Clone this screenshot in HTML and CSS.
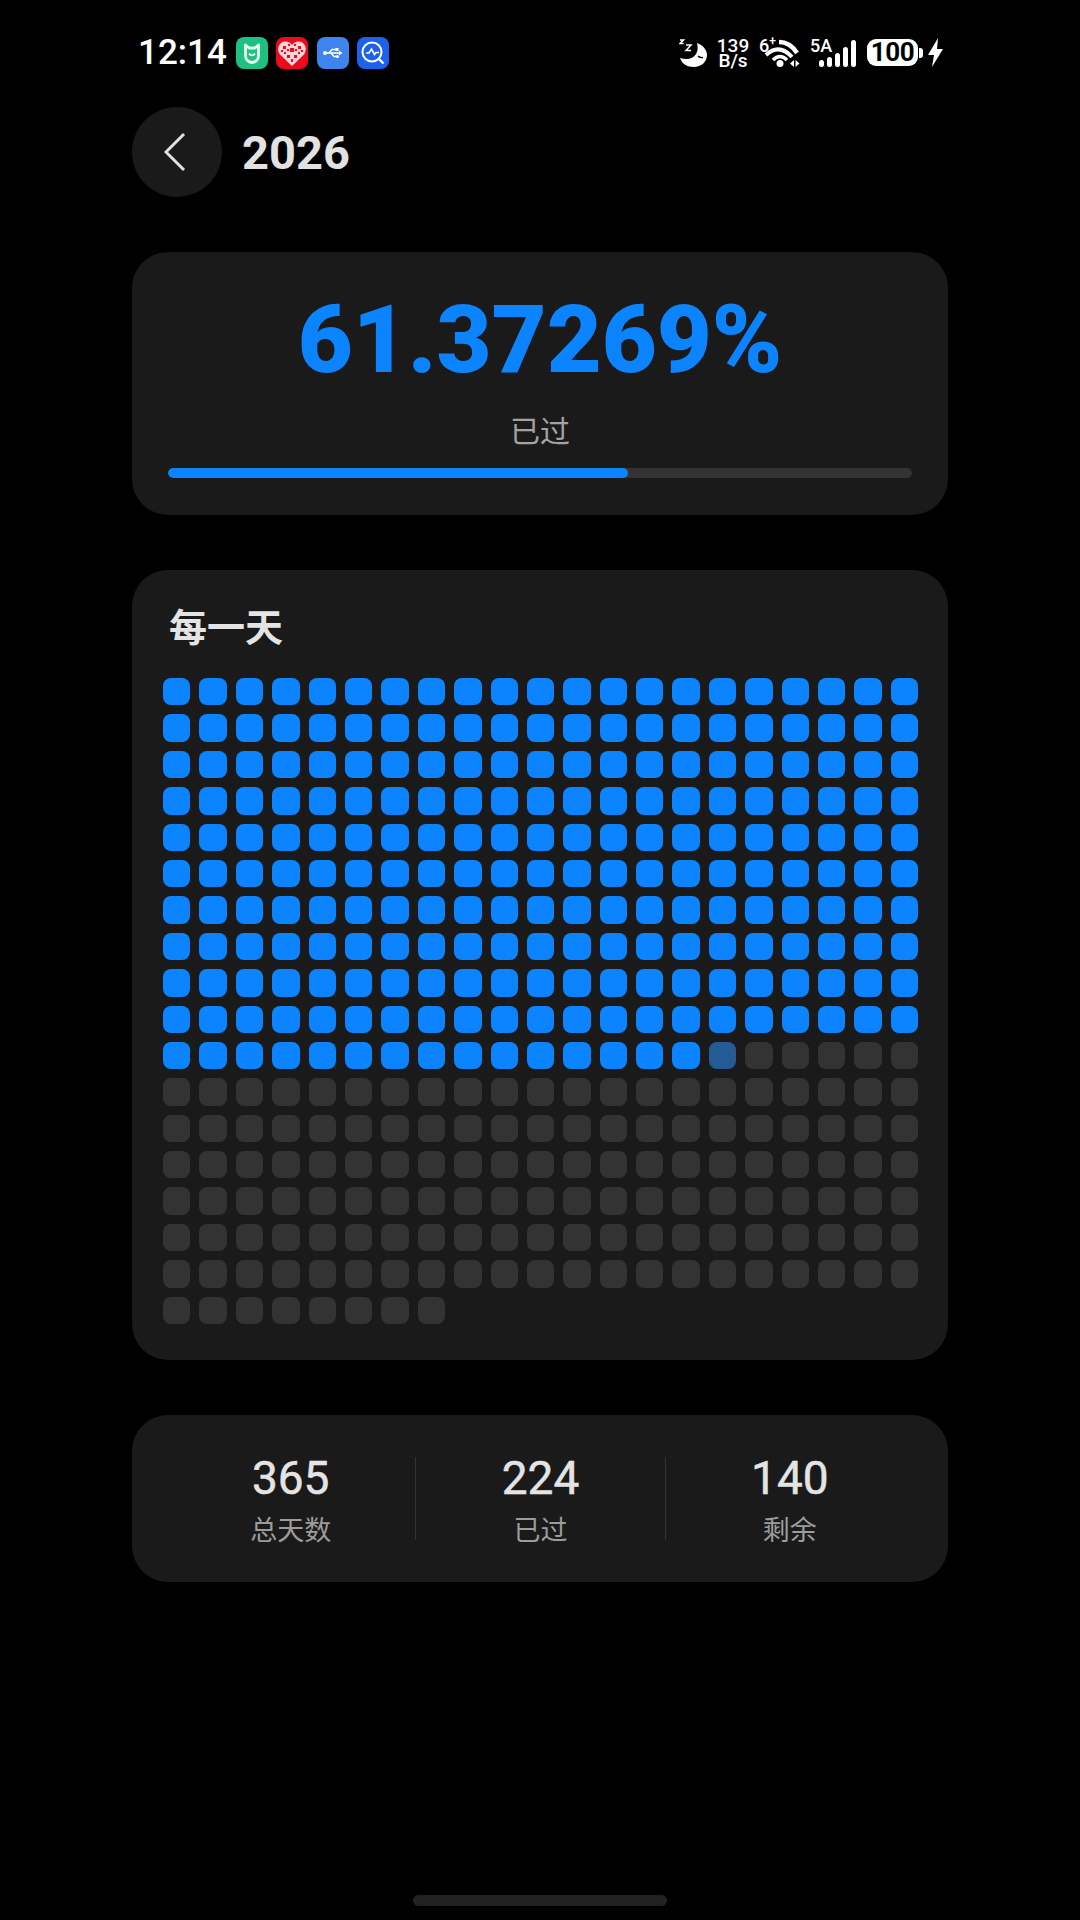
FILE: index.html
```html
<!DOCTYPE html>
<html lang="zh-CN">
<head>
  <meta charset="UTF-8">
  <meta name="viewport" content="width=device-width, initial-scale=1.0">
  <title>2026</title>
  <link rel="stylesheet" href="styles.css">
</head>
<body>
  <div id="statusBar">
    <div class="statusLeft">
      <span class="clock">12:14</span>
      <div class="appIcons">
        <svg class="appIcon" viewBox="0 0 32 32"><rect width="32" height="32" rx="8" fill="#1fc183"/><path d="M9.5 8v11a6.5 6.5 0 0 0 13 0V8l-3.5 3h-6z" fill="none" stroke="#e8fff5" stroke-width="2.8" stroke-linejoin="round"/><path d="M13 16.5c1.5 2.500 4.500 2.500 6 0" fill="none" stroke="#e8fff5" stroke-width="1.8"/></svg>
        <svg class="appIcon" viewBox="0 0 32 32"><rect width="32" height="32" rx="8" fill="#ee0a1c"/><path d="M16 29 4 17.5C0 12 3 4.5 9.5 4.5c3 0 5 1.500 6.500 3.500 1.500-2 3.500-3.500 6.500-3.500C29 4.500 32 12 28 17.500z" fill="#f9d3d6"/><path d="M7 9h3v3H7zM12 7h2v2h-2zM18 7h2v2h-2zM22 9h3v3h-3zM14 11h4v4h-4zM8 15h2v2H8zM22 15h2v2h-2zM11 18h3v3h-3zM18 18h3v3h-3zM15 22h2v3h-2zM5 13h2v2H5zM25 13h2v2h-2zM11 12h2v2h-2zM19 12h2v2h-2z" fill="#ee0a1c"/></svg>
        <svg class="appIcon" viewBox="0 0 32 32"><rect width="32" height="32" rx="8" fill="#3f84ee"/><path d="M8 16h15M12 16l3-3.500h4M14 16l3 3.500h3" fill="none" stroke="#fff" stroke-width="1.5"/><circle cx="8" cy="16" r="2" fill="#fff"/><path d="M22 13.5l3.5 2.500-3.500 2.500z" fill="#fff"/><rect x="18.5" y="11" width="3" height="3" fill="#fff"/><circle cx="20.5" cy="19.5" r="1.5" fill="#fff"/></svg>
        <svg class="appIcon" viewBox="0 0 32 32"><rect width="32" height="32" rx="8" fill="#1c62ea"/><circle cx="15" cy="15" r="9.5" fill="none" stroke="#fff" stroke-width="2"/><path d="M22 22l4.5 4.500" stroke="#fff" stroke-width="2.4"/><path d="M9 16h3l2.500-4 3 5.500 1.500-2h3" fill="none" stroke="#fff" stroke-width="1.6"/></svg>
      </div>
    </div>
    <div class="statusRight">
      <svg class="moon" viewBox="0 0 28 28">
        <path d="M18 4c6 2 10 7 10 12 0 7-6 12-13 12C8 28 3 25 1 19c7 2 13 1 16-4 2-3 2-7 1-11z" fill="#fff"/>
        <path d="M19 17c1.500 1.500 3 2 5 1.500" fill="none" stroke="#000" stroke-width="1.4"/>
        <path d="M1 1h3.500L1 4.500h3.500M7 6h5l-5 5.500h5" fill="none" stroke="#fff" stroke-width="1.5"/>
      </svg>
      <div class="speed"><span>139</span><span>B/s</span></div>
      <div class="wifiBox">
        <span class="wifiGen">6<sup>+</sup></span>
        <svg class="wifi" viewBox="0 0 41 29">
          <path d="M20 4Q31 4 38 15" fill="none" stroke="#fff" stroke-width="4.5"/>
          <path d="M7 17Q20 5 33 19" fill="none" stroke="#fff" stroke-width="4"/>
          <path d="M14 22Q21 15 28 22" fill="none" stroke="#fff" stroke-width="3.5"/>
          <circle cx="21" cy="25.500" r="3.500" fill="#fff"/>
          <path d="M31 25.500l4-3.500v7zM36.500 22l4 3.500-4 3.500z" fill="#fff"/>
        </svg>
      </div>
      <div class="signal">
        <span class="netType">5A</span>
        <div class="bars"><i class="b1"></i><i class="b2"></i><i class="b3"></i><i class="b4"></i><i class="b5"></i></div>
      </div>
      <div class="battery"><span class="batteryBody">100</span><i class="batteryNub"></i></div>
      <svg class="bolt" viewBox="0 0 15 29"><path d="M10 0 0 17h6l-2 12L15 11H9z" fill="#fff"/></svg>
    </div>
  </div>

  <div id="wrapper">
    <div class="header">
      <div class="backButton">
        <svg viewBox="0 0 22 40"><path d="M20 2 2 20l18 18" fill="none" stroke="#e0e0e0" stroke-width="3"/></svg>
      </div>
      <h1>2026</h1>
    </div>

    <div class="card percentCard">
      <div class="percent">61.37269%</div>
      <div class="percentLabel">已过</div>
      <div class="progress"><div class="progressFill" style="width: 61.8%"></div></div>
    </div>

    <div class="card daysCard">
      <h2>每一天</h2>
      <div id="dayGrid"></div>
    </div>

    <div class="card statsCard">
      <div class="stat"><span class="statValue">365</span><span class="statLabel">总天数</span></div>
      <div class="stat"><span class="statValue">224</span><span class="statLabel">已过</span></div>
      <div class="stat"><span class="statValue">140</span><span class="statLabel">剩余</span></div>
    </div>
  </div>

  <div id="homeBar"></div>
  <script src="script.js"></script>
</body>
</html>
```

FILE: styles.css
```css
html, body {
  margin: 0;
  padding: 0;
  width: 100%;
  height: 100%;
  overflow: hidden;
}
body {
  position: relative;
  background: #000;
  font-family: Roboto, "Noto Sans CJK SC", sans-serif;
  color: #e4e4e4;
}
/* Status bar */
#statusBar {
  height: 107px;
  padding: 0 137px 2px 138px;
  box-sizing: border-box;
  display: flex;
  justify-content: space-between;
  align-items: center;
}
.statusLeft, .statusRight, .appIcons {
  display: flex;
  align-items: center;
}
.clock {
  font-size: 35px;
  font-weight: 500;
  color: #fff;
  margin-right: 9px;
}
.appIcons {
  gap: 8.4px;
}
.appIcon {
  width: 32px;
  height: 32px;
}
.moon {
  width: 28px;
  height: 28px;
  margin-right: 10px;
}
.speed {
  display: flex;
  flex-direction: column;
  align-items: center;
  width: 32px;
  margin-right: 10px;
  font-size: 19px;
  font-weight: 500;
  line-height: 15px;
  color: #fff;
}
.wifiBox {
  position: relative;
  width: 41px;
  height: 29px;
}
.wifi {
  display: block;
  width: 41px;
  height: 29px;
}
.wifiGen {
  position: absolute;
  left: 0;
  top: -1px;
  font-size: 18px;
  font-weight: 500;
  color: #fff;
  line-height: 17px;
}
.wifiGen sup {
  font-size: 12px;
  line-height: 0;
}
.signal {
  position: relative;
  width: 46px;
  height: 29px;
  margin: 0 11px 0 10px;
}
.netType {
  position: absolute;
  left: 0;
  top: -1px;
  font-size: 18px;
  font-weight: 500;
  line-height: 17px;
  color: #fff;
}
.bars {
  position: absolute;
  right: 0;
  bottom: 0;
  display: flex;
  align-items: flex-end;
  gap: 2.5px;
}
.bars i {
  display: block;
  width: 5.5px;
  background: #fff;
  border-radius: 3px;
}
.b1 { height: 7px; }
.b2 { height: 10px; }
.b3 { height: 14px; }
.b4 { height: 20px; }
.b5 { height: 27px; }
.battery {
  display: flex;
  align-items: center;
  gap: 1px;
  margin-right: 5px;
}
.batteryBody {
  width: 51px;
  height: 27px;
  border-radius: 9px;
  background: #fff;
  color: #000;
  font-size: 26px;
  font-weight: 700;
  line-height: 27px;
  text-align: center;
  letter-spacing: -0.5px;
}
.batteryNub {
  display: block;
  width: 4px;
  height: 10px;
  border-radius: 0 3px 3px 0;
  background: #fff;
}
.bolt {
  width: 15px;
  height: 29px;
}
/* Page */
#wrapper {
  padding: 0 132px;
}
.header {
  display: flex;
  align-items: center;
  gap: 20px;
  margin-bottom: 55px;
}
.backButton {
  width: 90px;
  height: 90px;
  border-radius: 50%;
  background: #1a1a1a;
  display: flex;
  justify-content: center;
  align-items: center;
}
.backButton svg {
  width: 22px;
  height: 40px;
  margin-right: 4px;
}
h1 {
  margin: 0;
  font-size: 47px;
  font-weight: 700;
  color: #e2e2e2;
}
.card {
  background: #1a1a1a;
  border-radius: 36px;
  margin-bottom: 55px;
}
.percentCard {
  height: 263px;
  box-sizing: border-box;
  padding: 38px 36px 0;
  text-align: center;
}
.percent {
  font-size: 95px;
  font-weight: 900;
  line-height: 100px;
  color: #0d84ff;
}
.percentLabel {
  font-size: 30px;
  line-height: 40px;
  margin-top: 22px;
  color: #a3a3a3;
}
.progress {
  height: 10px;
  margin-top: 16px;
  border-radius: 5px;
  background: #333;
  overflow: hidden;
}
.progressFill {
  height: 100%;
  border-radius: 5px;
  background: #0d84ff;
}
.daysCard {
  height: 790px;
  box-sizing: border-box;
  padding: 31px 30px 0 31px;
}
h2 {
  margin: 0 0 23px 6px;
  font-size: 38px;
  font-weight: 700;
  line-height: 54px;
  color: #e4e4e4;
}
#dayGrid {
  display: grid;
  grid-template-columns: repeat(21, 1fr);
  gap: 9px;
}
.day {
  aspect-ratio: 1;
  border-radius: 8px;
  background: #333;
}
.day.past {
  background: #0d84ff;
}
.day.today {
  background: #245b94;
}
.statsCard {
  height: 167px;
  box-sizing: border-box;
  padding: 0 34px;
  display: grid;
  grid-template-columns: repeat(3, 1fr);
  align-items: center;
}
.stat {
  height: 83px;
  display: flex;
  flex-direction: column;
  align-items: center;
  border-left: 1px solid #333;
}
.stat:first-child {
  border-left: none;
}
.statValue {
  font-size: 46px;
  font-weight: 400;
  -webkit-text-stroke: 0.5px #e4e4e4;
  line-height: 50px;
  margin-top: -4px;
  color: #e4e4e4;
}
.statLabel {
  font-size: 27px;
  line-height: 24px;
  margin-top: 16px;
  color: #9c9c9c;
}
#homeBar {
  position: absolute;
  left: 413px;
  bottom: 14px;
  width: 254px;
  height: 11px;
  border-radius: 6px;
  background: #222;
}
```

FILE: script.js
```js
const dayGrid = document.getElementById('dayGrid');
const totalDays = 365;
const pastDays = 225;

for (let i = 0; i < totalDays; i++) {
  const day = document.createElement('div');
  day.className = 'day';
  if (i < pastDays) day.className += ' past';
  if (i === pastDays) day.className += ' today';
  dayGrid.appendChild(day);
}
```
